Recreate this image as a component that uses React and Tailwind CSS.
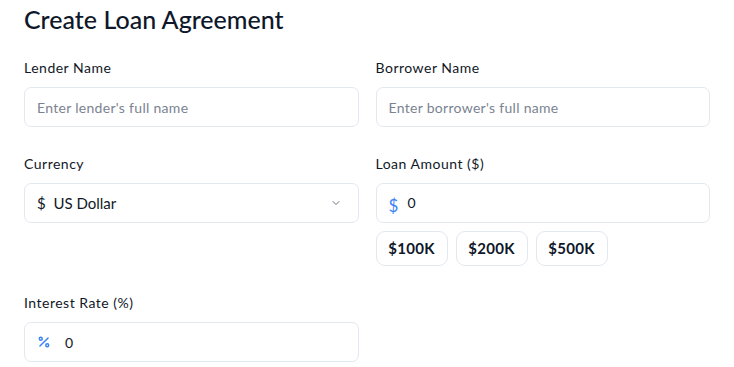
import React from "react";

const font = { fontFamily: "Lato, 'Noto Sans', sans-serif" };

function Label({ children }) {
  return <div className="text-[14px] leading-5 tracking-[0.5px] text-[#111827] mb-[9px]">{children}</div>;
}

function Field({ label, children }) {
  return (
    <div className="flex flex-col">
      <Label>{label}</Label>
      {children}
    </div>
  );
}

const box = "h-10 w-full rounded-[7px] border border-[#e2e8f0] bg-white flex items-center";

export default function App() {
  return (
    <div className="bg-white w-[734px] h-[367px] overflow-hidden px-6 pt-[3px] font-['Lato']" style={font}>
      <h1 className="text-[25px] leading-8 text-[#0f172a] font-medium">Create Loan Agreement</h1>
      <div className="grid grid-cols-2 gap-x-[17px] gap-y-[27px] mt-[23px]">
        <Field label="Lender Name">
          <div className={box + " px-3"}>
            <span className="text-[14px] tracking-[0.3px] text-[#7b8391]">Enter lender's full name</span>
          </div>
        </Field>
        <Field label="Borrower Name">
          <div className={box + " px-3"}>
            <span className="text-[14px] tracking-[0.3px] text-[#7b8391]">Enter borrower's full name</span>
          </div>
        </Field>
        <Field label="Currency">
          <div className={box + " px-3 justify-between"}>
            <span className="text-[15px] text-[#111827]">$&nbsp; US Dollar</span>
            <svg width="12" height="12" viewBox="0 0 24 24" fill="none" stroke="#6b7280" strokeWidth="2" strokeLinecap="round" strokeLinejoin="round" className="mr-1">
              <path d="m6 9 6 6 6-6" />
            </svg>
          </div>
        </Field>
        <Field label="Loan Amount ($)">
          <div className={box + " px-3"}>
            <span className="text-[17px] text-[#3b82f6] mt-[5px] leading-none">$</span>
            <span className="text-[14px] text-[#111827] ml-[9px] -mt-[2px]">0</span>
          </div>
          <div className="flex gap-2 mt-[8px]">
            {["$100K", "$200K", "$500K"].map((t) => (
              <div key={t} className="w-[72px] h-[35px] rounded-[9px] border border-[#e2e8f0] flex items-center justify-center text-[15px] font-bold tracking-[0.3px] text-[#0f172a]">
                {t}
              </div>
            ))}
          </div>
        </Field>
        <Field label="Interest Rate (%)">
          <div className={box + " px-3"}>
            <svg width="14" height="14" viewBox="0 0 24 24" fill="none" stroke="#3b82f6" strokeWidth="2.5" strokeLinecap="round" strokeLinejoin="round">
              <line x1="19" x2="5" y1="5" y2="19" />
              <circle cx="6.5" cy="6.5" r="2.5" />
              <circle cx="17.5" cy="17.5" r="2.5" />
            </svg>
            <span className="text-[14px] text-[#111827] ml-[14px]">0</span>
          </div>
        </Field>
      </div>
    </div>
  );
}
